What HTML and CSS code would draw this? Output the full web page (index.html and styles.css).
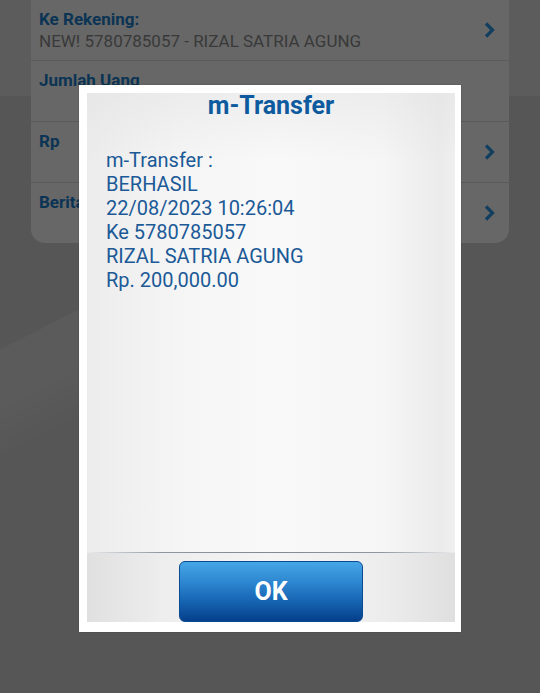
FILE: index.html
```html
<!DOCTYPE html>
<html lang="id">
<head>
<meta charset="utf-8">
<title>m-Transfer</title>
<link rel="stylesheet" href="styles.css">
</head>
<body>
<div class="screen">
  <div class="card">
    <div class="row">
      <div class="row-text">
        <div class="label">Ke Rekening:</div>
        <div class="value">NEW! 5780785057 - RIZAL SATRIA AGUNG</div>
      </div>
      <svg class="chev" viewBox="0 0 11 16" width="11" height="16"><polyline points="2,1.5 8.5,8 2,14.5"/></svg>
    </div>
    <div class="row">
      <div class="row-text">
        <div class="label">Jumlah Uang</div>
      </div>
    </div>
    <div class="row">
      <div class="row-text">
        <div class="label">Rp</div>
      </div>
      <svg class="chev" viewBox="0 0 11 16" width="11" height="16"><polyline points="2,1.5 8.5,8 2,14.5"/></svg>
    </div>
    <div class="row last">
      <div class="row-text">
        <div class="label">Berita</div>
      </div>
      <svg class="chev" viewBox="0 0 11 16" width="11" height="16"><polyline points="2,1.5 8.5,8 2,14.5"/></svg>
    </div>
  </div>

  <div class="dialog">
    <div class="panel">
      <div class="content">
        <h1 class="title">m-Transfer</h1>
        <div class="message">m-Transfer :<br>BERHASIL<br>22/08/2023 10:26:04<br>Ke 5780785057<br>RIZAL SATRIA AGUNG<br>Rp. 200,000.00</div>
      </div>
      <div class="divider"></div>
      <div class="footer">
        <button class="ok">OK</button>
      </div>
    </div>
  </div>
</div>
</body>
</html>
```

FILE: styles.css
```css
html, body {
  margin: 0;
  padding: 0;
}

body {
  width: 540px;
  height: 693px;
  overflow: hidden;
  font-family: Roboto, "Noto Sans", sans-serif;
  background: #565656;
}

.screen {
  position: relative;
  width: 540px;
  height: 693px;
  background:
    linear-gradient(153deg, rgba(255,255,255,0) 0 47%, rgba(255,255,255,0.03) 47% 54%, rgba(255,255,255,0) 62%) 0 0 / 100px 693px no-repeat,
    linear-gradient(to bottom, #5c5c5c 0 96px, #565656 96px 100%);
}

.card {
  margin-left: 31px;
  width: 478px;
  background: #676767;
  border-radius: 0 0 14px 14px;
}

.row {
  display: flex;
  height: 60px;
  padding: 0 14px 0 8px;
  border-bottom: 1px solid #5a5a5a;
}

.row.last {
  border-bottom: none;
}

.row-text {
  flex: 1;
  padding-top: 8px;
}

.label {
  font-size: 17px;
  line-height: 22px;
  font-weight: 700;
  color: #0b3454;
}

.value {
  font-size: 17px;
  line-height: 22px;
  color: #393939;
}

.chev {
  align-self: center;
  flex: none;
}

.chev polyline {
  fill: none;
  stroke: #123f60;
  stroke-width: 3.2;
  stroke-linejoin: miter;
}

.dialog {
  position: absolute;
  left: 79px;
  top: 85px;
  width: 382px;
  height: 547px;
  box-sizing: border-box;
  padding: 8px 6px 10px 8px;
  background: #ffffff;
  box-shadow: 0 0 1px rgba(0,0,0,0.4);
}

.panel {
  height: 100%;
  display: flex;
  flex-direction: column;
}

.content {
  flex: 1;
  background:
    linear-gradient(to bottom, rgba(225,225,225,0.45) 0, rgba(240,240,240,0) 70px),
    linear-gradient(to right, #ececec 0, #f5f5f5 25%, #f9f9f9 50%, #f6f6f6 80%, #ebebeb 96%, #f0f0f0 100%);
}

.title {
  margin: 0;
  font-size: 25px;
  line-height: 26px;
  font-weight: 700;
  text-align: center;
  color: #0d5a9e;
}

.message {
  margin-top: 29px;
  padding-left: 19px;
  font-size: 20px;
  line-height: 24px;
  color: #1b5a97;
}

.divider {
  height: 1px;
  background: linear-gradient(to right, rgba(150,160,170,0.2) 0, #8e98a2 20%, #7f8a95 50%, #8e98a2 80%, rgba(150,160,170,0.2) 100%);
}

.footer {
  height: 69px;
  box-sizing: border-box;
  padding-top: 8px;
  display: flex;
  justify-content: center;
  background: linear-gradient(to right, #e0e0e0 0, #ededed 20%, #f4f4f4 50%, #ededed 80%, #dfdfdf 100%);
}

.ok {
  width: 184px;
  height: 61px;
  border: 1px solid #0a4a93;
  border-radius: 6px;
  background: linear-gradient(to bottom, #45a6e6 0, #2d86d0 35%, #1766b4 65%, #053f8a 100%);
  color: #ffffff;
  font-family: Roboto, "Noto Sans", sans-serif;
  font-size: 25px;
  font-weight: 700;
  padding: 0;
}
```
